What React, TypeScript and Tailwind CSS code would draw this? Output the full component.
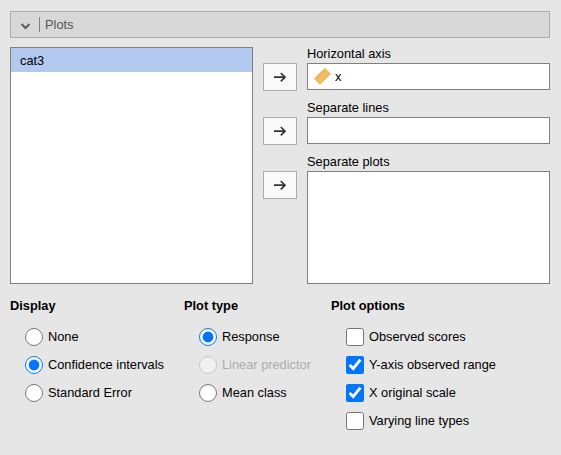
import React from "react";

const ArrowButton = () => (
  <button
    type="button"
    className="flex h-7 w-[34px] shrink-0 items-center justify-center border border-[#acacac] bg-[#fafafa]"
  >
    <svg width="14" height="12" viewBox="0 0 14 12" fill="none" stroke="#333" strokeWidth="1.7">
      <path d="M1 6.2H12M7.8 2L12 6.2L7.8 10.4" />
    </svg>
  </button>
);

const RulerIcon = () => (
  <svg width="18" height="18" viewBox="0 0 18 18">
    <path
      d="M1.6 10.8L11.8 0.5L17.2 5.7L7 16.2Z"
      fill="#f3bd62"
      stroke="#e6a63c"
      strokeWidth="0.9"
      strokeLinejoin="round"
    />
    <path
      d="M3.6 9.2L5.2 10.8M5.4 7.2L6.6 8.3M7.3 5.2L9.1 6.8M9.3 3.2L10.5 4.3"
      stroke="#dd9c33"
      strokeWidth="0.9"
    />
  </svg>
);

type Choice = { label: string; checked?: boolean; disabled?: boolean };

const ChoiceGroup = ({
  title,
  type,
  items,
  className,
}: {
  title: string;
  type: "radio" | "checkbox";
  items: Choice[];
  className: string;
}) => (
  <fieldset className={className}>
    <legend className="h-4 font-bold">{title}</legend>
    <div className="mt-[9px] flex flex-col pl-[15px]">
      {items.map((item) => (
        <label
          key={item.label}
          className={`flex h-7 items-center gap-[5px] whitespace-nowrap ${item.disabled ? "text-[#acacac]" : ""}`}
        >
          <input
            type={type}
            name={title}
            defaultChecked={item.checked}
            disabled={item.disabled}
            className="m-0 size-[18px] shrink-0"
          />
          {item.label}
        </label>
      ))}
    </div>
  </fieldset>
);

const Target = ({ label, boxClass, children }: { label: string; boxClass: string; children?: React.ReactNode }) => (
  <div className="flex gap-[10px]">
    <div className="pt-4">
      <ArrowButton />
    </div>
    <div className="w-[243px]">
      <div className="h-4 leading-[14px]">{label}</div>
      <div className={`border border-[#808080] bg-white ${boxClass}`}>{children}</div>
    </div>
  </div>
);

export default function App() {
  return (
    <div className="h-[455px] w-[561px] bg-[#e6e6e6] px-[10px] pt-[11px] font-['Liberation_Sans',Arial,sans-serif] text-[12.8px] leading-4 text-black">
      <div className="flex h-[27px] w-[540px] items-center border border-[#acacac] bg-[#d8d8d8] pl-[9px] text-[#555]">
        <svg width="11" height="10" viewBox="0 0 11 10" fill="none" stroke="#5c5c5c" strokeWidth="2">
          <path d="M1.5 4L5.5 8L9.5 4" />
        </svg>
        <div className="ml-2 h-[15px] w-px bg-[#808080]" />
        <span className="ml-[5px]">Plots</span>
      </div>

      <div className="mt-[9px] flex h-[237px] gap-[10px]">
        <div className="w-[243px] border border-[#808080] bg-white">
          <div className="flex h-6 items-center bg-[#b3c9f0] pl-[9px] pt-[2px]">cat3</div>
        </div>
        <div className="flex flex-col">
          <Target label="Horizontal axis" boxClass="mb-[11px] flex h-[27px] items-center gap-1 pl-[5px]">
            <RulerIcon />
            <span>x</span>
          </Target>
          <Target label="Separate lines" boxClass="mb-[11px] h-[27px]" />
          <Target label="Separate plots" boxClass="h-[113px]" />
        </div>
      </div>

      <div className="flex pt-[14px]">
        <ChoiceGroup
          title="Display"
          type="radio"
          className="w-[174px]"
          items={[{ label: "None" }, { label: "Confidence intervals", checked: true }, { label: "Standard Error" }]}
        />
        <ChoiceGroup
          title="Plot type"
          type="radio"
          className="w-[147px]"
          items={[
            { label: "Response", checked: true },
            { label: "Linear predictor", disabled: true },
            { label: "Mean class" },
          ]}
        />
        <ChoiceGroup
          title="Plot options"
          type="checkbox"
          className="w-[200px]"
          items={[
            { label: "Observed scores" },
            { label: "Y-axis observed range", checked: true },
            { label: "X original scale", checked: true },
            { label: "Varying line types" },
          ]}
        />
      </div>
    </div>
  );
}
